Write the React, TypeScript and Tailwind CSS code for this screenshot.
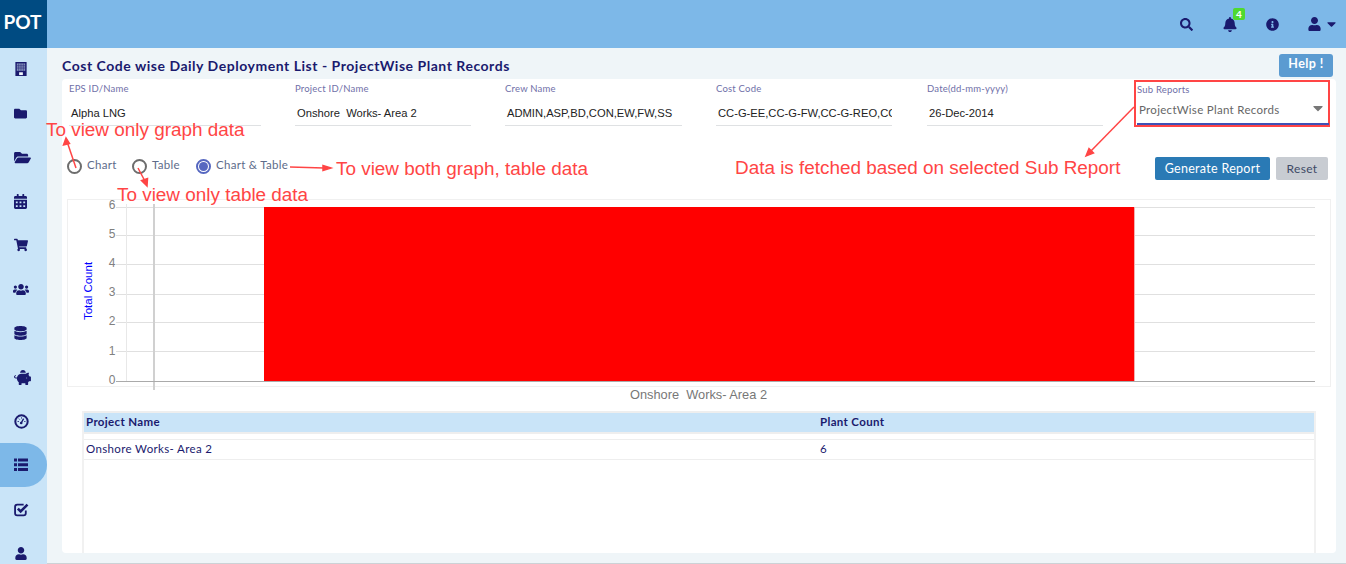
import React from 'react';
import {
  FaFolder, FaFolderOpen, FaCalendarAlt, FaShoppingCart, FaUsers, FaDatabase,
  FaPiggyBank, FaUser, FaSearch, FaBell, FaInfoCircle, FaCaretDown,
} from 'react-icons/fa';

type IconProps = { className?: string };

const Building = ({ className }: IconProps) => (
  <svg viewBox="0 0 12 15" className={className}>
    <rect x="0" y="0" width="12" height="15" fill="#1a1a6e" />
    <rect x="1.5" y="1.5" width="9" height="8" fill="#7f8cb8" />
    <path d="M3.5 1.5v8M6 1.5v8M8.5 1.5v8M1.5 4h9M1.5 6.5h9" stroke="#2a2a78" strokeWidth="0.6" />
    <rect x="4" y="11" width="4" height="3" fill="#f2f8fd" />
  </svg>
);

const Gauge = ({ className }: IconProps) => (
  <svg viewBox="0 0 15 15" className={className} fill="none" stroke="currentColor">
    <circle cx="7.5" cy="7.5" r="6.2" strokeWidth="2" />
    <path d="M7.2 9 L9.6 4.6" strokeWidth="1.3" />
    <circle cx="7.2" cy="9" r="1.3" fill="currentColor" stroke="none" />
    <path d="M3.6 7.5h1.2M4.9 4.7l.8.8M7.5 3.4v1.1M11.4 7.5h-1.1" strokeWidth="1" />
  </svg>
);

const ListIcon = ({ className }: IconProps) => (
  <svg viewBox="0 0 14 14" className={className} fill="currentColor">
    <path d="M0 0.5h3v3H0zM4 0.5h10v3H4zM0 5.3h3v3H0zM4 5.3h10v3H4zM0 10.1h3v3H0zM4 10.1h10v3H4z" />
  </svg>
);

const CheckBox = ({ className }: IconProps) => (
  <svg viewBox="0 0 14 14" className={className} fill="none" stroke="currentColor">
    <path d="M11 8v2.5a2 2 0 0 1-2 2H3a2 2 0 0 1-2-2v-6a2 2 0 0 1 2-2h6" strokeWidth="1.7" />
    <path d="M3.6 6.2 L6.2 8.8 L12.6 2.4" strokeWidth="2.4" />
  </svg>
);

const sideItems = [
  { icon: Building, cls: 'w-[12px] h-[14px]' },
  { icon: FaFolder, cls: 'w-[13px] h-[13px]' },
  { icon: FaFolderOpen, cls: 'w-[17px] h-[15px] ml-[3px]' },
  { icon: FaCalendarAlt, cls: 'w-[13px] h-[15px]' },
  { icon: FaShoppingCart, cls: 'w-[14px] h-[14px]' },
  { icon: FaUsers, cls: 'w-[16px] h-[15px] ml-[1px]' },
  { icon: FaDatabase, cls: 'w-[13px] h-[14px]' },
  { icon: FaPiggyBank, cls: 'w-[17px] h-[15px] ml-[3px]' },
  { icon: Gauge, cls: 'w-[15px] h-[15px] ml-[1px]' },
  { icon: ListIcon, cls: 'w-[14px] h-[14px] ml-[1px]', active: true },
  { icon: CheckBox, cls: 'w-[15px] h-[15px] ml-[1px]' },
  { icon: FaUser, cls: 'w-[12px] h-[13px]' },
];

const fields = [
  { label: 'EPS ID/Name', value: 'Alpha LNG', w: 'w-[192px]', mr: 'mr-[34px]' },
  { label: 'Project ID/Name', value: 'Onshore  Works- Area 2', w: 'w-[176px]', mr: 'mr-[34px]' },
  { label: 'Crew Name', value: 'ADMIN,ASP,BD,CON,EW,FW,SS', w: 'w-[177px]', mr: 'mr-[34px]' },
  { label: 'Cost Code', value: 'CC-G-EE,CC-G-FW,CC-G-REO,CC', w: 'w-[176px]', mr: 'mr-[35px]' },
  { label: 'Date(dd-mm-yyyy)', value: '26-Dec-2014', w: 'w-[176px]', mr: 'mr-[31px]' },
];

const gridY = [207, 235, 264, 294, 322, 351];

const Radio = ({ label, checked, className }: { label: string; checked?: boolean; className?: string }) => (
  <div className={`flex items-center ${className ?? ''}`}>
    {checked ? (
      <span className="w-[15px] h-[15px] rounded-full border-2 border-[#5667c0] flex items-center justify-center">
        <span className="w-[9px] h-[9px] rounded-full bg-[#5667c0]" />
      </span>
    ) : (
      <span className="w-[15px] h-[15px] rounded-full border-2 border-[#6d6d6d]" />
    )}
    <span className="ml-[5px] -mt-[3px] text-[11.5px] tracking-[0.3px] text-[#5d6b8a]">{label}</span>
  </div>
);

const Note = ({ children, className }: { children: React.ReactNode; className: string }) => (
  <div className={`absolute whitespace-nowrap text-[18.9px] leading-[22px] text-[#ff4545] font-['Liberation_Sans',sans-serif] ${className}`}>
    {children}
  </div>
);

export default function App() {
  return (
    <div className="relative w-[1346px] h-[564px] overflow-hidden flex font-['Lato',sans-serif] bg-[#eff5f8]">
      {/* Sidebar */}
      <div className="w-[47px] shrink-0 bg-[#c9e4f8] flex flex-col overflow-hidden">
        <div className="h-[48px] shrink-0 -mb-px bg-[#004b82] flex items-center justify-center text-white font-bold text-[19px] pb-[3px] pr-[2px]">POT</div>
        {sideItems.map((item, i) => {
          const Icon = item.icon;
          return (
            <div
              key={i}
              className={`h-[44px] shrink-0 flex items-center justify-center text-[#1a1a6e] pr-[6px] ${item.active ? 'bg-[#7db8e8] rounded-r-[22px]' : ''}`}
            >
              <Icon className={item.cls} />
            </div>
          );
        })}
      </div>

      <div className="flex-1 flex flex-col min-w-0">
        {/* Top bar */}
        <div className="h-[48px] shrink-0 bg-[#7db8e8] flex items-center text-[#1a1a6e]">
          <FaSearch className="ml-[1133px] w-[13px] h-[13px]" />
          <div className="relative ml-[30px]">
            <FaBell className="w-[14px] h-[15px]" />
            <span className="absolute -top-[9px] left-[10px] w-[12px] h-[12px] rounded-[2px] bg-[#4fd92f] text-white text-[10px] leading-[12px] font-bold text-center">4</span>
          </div>
          <FaInfoCircle className="ml-[29px] w-[13px] h-[13px]" />
          <FaUser className="ml-[29px] w-[13px] h-[14px]" />
          <FaCaretDown className="ml-[6px] w-[9px] h-[14px]" />
        </div>

        {/* Main */}
        <div className="flex-1 flex flex-col pl-[15px] pr-[10px] border-b border-[#ccd2d6]">
          <div className="h-[31px] flex items-center justify-between pt-[3px]">
            <div className="text-[14px] font-bold text-[#1a1a6e] tracking-[0.53px]">Cost Code wise Daily Deployment List - ProjectWise Plant Records</div>
            <button className="w-[54px] h-[23px] mr-[3px] rounded-[3px] bg-[#5b9bd1] text-white text-[12.5px] font-bold tracking-[0.4px] pb-[2px]">Help !</button>
          </div>

          <div className="h-[474px] bg-white rounded-[4px] flex flex-col">
            {/* Filters */}
            <div className="flex pl-[7px] pt-[4px] h-[48px]">
              {fields.map((f) => (
                <div key={f.label} className={`${f.w} ${f.mr} h-[43px] border-b border-[#dfe1e3]`}>
                  <div className="text-[9.5px] leading-[11px] tracking-[0.2px] text-[#6f6fa8]">{f.label}</div>
                  <div className="mt-[12px] pl-[2px] text-[11.2px] leading-[14px] text-[#222] whitespace-pre overflow-hidden font-['Liberation_Sans',sans-serif]">{f.value}</div>
                </div>
              ))}
              <div className="w-[196px] h-[47px] -mt-[3px] border-2 border-[#ff4545] pl-[1px] pt-[2px]">
                <div className="text-[9.5px] leading-[11px] tracking-[0.2px] text-[#6f6fa8]">Sub Reports</div>
                <div className="h-[30px] border-b-2 border-[#3f51b5] flex items-center justify-between pl-[2px] pr-[6px] pb-[3px] text-[#666] -mr-px">
                  <span className="mt-[5px] text-[11.5px] tracking-[0.3px]">ProjectWise Plant Records</span>
                  <FaCaretDown className="w-[10px] h-[16px] text-[#777]" />
                </div>
              </div>
            </div>

            {/* Radios and buttons */}
            <div className="flex items-start h-[72px]">
              <div className="flex items-center pl-[5px] pt-[32px]">
                <Radio label="Chart" className="w-[65px]" />
                <Radio label="Table" className="w-[64px]" />
                <Radio label="Chart & Table" checked />
              </div>
              <div className="ml-auto flex gap-[6px] pr-[8px] pt-[30px]">
                <button className="w-[115px] h-[23px] rounded-[2px] bg-[#2a7ab5] text-white text-[12.5px] tracking-[0.3px] pt-[2px]">Generate Report</button>
                <button className="w-[52px] h-[23px] rounded-[2px] bg-[#c8ccd2] text-[#3e4a66] text-[12px] tracking-[0.3px]">Reset</button>
              </div>
            </div>

            {/* Chart */}
            <div className="ml-[5px] w-[1264px] h-[188px] border border-[#f0f0f0] shrink-0">
              <svg width="1262" height="186" viewBox="68 200 1262 186" className="block overflow-visible font-['Liberation_Sans',sans-serif]">
                {gridY.map((y) => (
                  <line key={y} x1="116" x2="1315" y1={y + 0.5} y2={y + 0.5} stroke="#e0e0e0" />
                ))}
                <line x1="126.5" x2="126.5" y1="204" y2="381" stroke="#e8e8e8" />
                <line x1="154" x2="154" y1="204" y2="390" stroke="#d0d0d0" strokeWidth="2" />
                <rect x="264" y="207" width="870" height="174" fill="#ff0000" />
                <line x1="1134.5" x2="1134.5" y1="207" y2="381" stroke="#f0b0b0" />
                <line x1="116" x2="1315" y1="381.5" y2="381.5" stroke="#aaaaaa" />
                {[6, 5, 4, 3, 2, 1, 0].map((n, i) => (
                  <text key={n} x="112" y={[209, 238, 267, 296, 325, 355, 384][i]} textAnchor="middle" fontSize="12" fill="#808080">{n}</text>
                ))}
                <text transform="translate(92 291) rotate(-90)" textAnchor="middle" fontSize="11.5" fill="#0000ff">Total Count</text>
              </svg>
            </div>
            <div className="h-[24px] shrink-0 pl-[568px] pt-[1px] leading-[14px] text-[12.8px] font-['Liberation_Sans',sans-serif] text-[#777] whitespace-pre">Onshore  Works- Area 2</div>

            {/* Table */}
            <div className="ml-[20px] w-[1234px] flex-1 border-x-2 border-[#f1f1f1] text-[11.5px] tracking-[0.35px] text-[#1a1a6e]">
              <div className="border-y-2 border-[#eeeeee] flex h-[23px] items-center bg-[#c9e4f8] font-bold pb-[1px]">
                <div className="w-[736px] pl-[2px]">Project Name</div>
                <div>Plant Count</div>
              </div>
              <div className="mt-[5px] border-y border-[#eeeeee] flex h-[21px] items-center pb-[1px]">
                <div className="w-[736px] pl-[2px]">Onshore Works- Area 2</div>
                <div>6</div>
              </div>
            </div>
          </div>
          <div className="flex-1" />
        </div>
      </div>

      {/* Annotations */}
      <Note className="left-[46px] top-[119px]">To view only graph data</Note>
      <Note className="left-[117px] top-[184px]">To view only table data</Note>
      <Note className="left-[336px] top-[158px]">To view both graph, table data</Note>
      <Note className="left-[735px] top-[157px]">Data is fetched based on selected Sub Report</Note>
      <svg className="absolute inset-0 pointer-events-none" width="1346" height="564" fill="none" stroke="#ff4545" strokeWidth="1.5">
        <path d="M76 168 L66.5 140" />
        <path d="M66 138 L63.5 145 L69.5 143.5 Z" fill="#ff4545" />
        <path d="M138 168 L146.5 184" />
        <path d="M147 186 L141.5 180.5 L147.5 178.5 Z" fill="#ff4545" />
        <path d="M290 167 L324 168" />
        <path d="M331 168 L323 165.5 L323 170.5 Z" fill="#ff4545" />
        <path d="M1134 107 L1089 153" />
        <path d="M1086 156 L1089 148.5 L1093.5 153 Z" fill="#ff4545" />
      </svg>
    </div>
  );
}
